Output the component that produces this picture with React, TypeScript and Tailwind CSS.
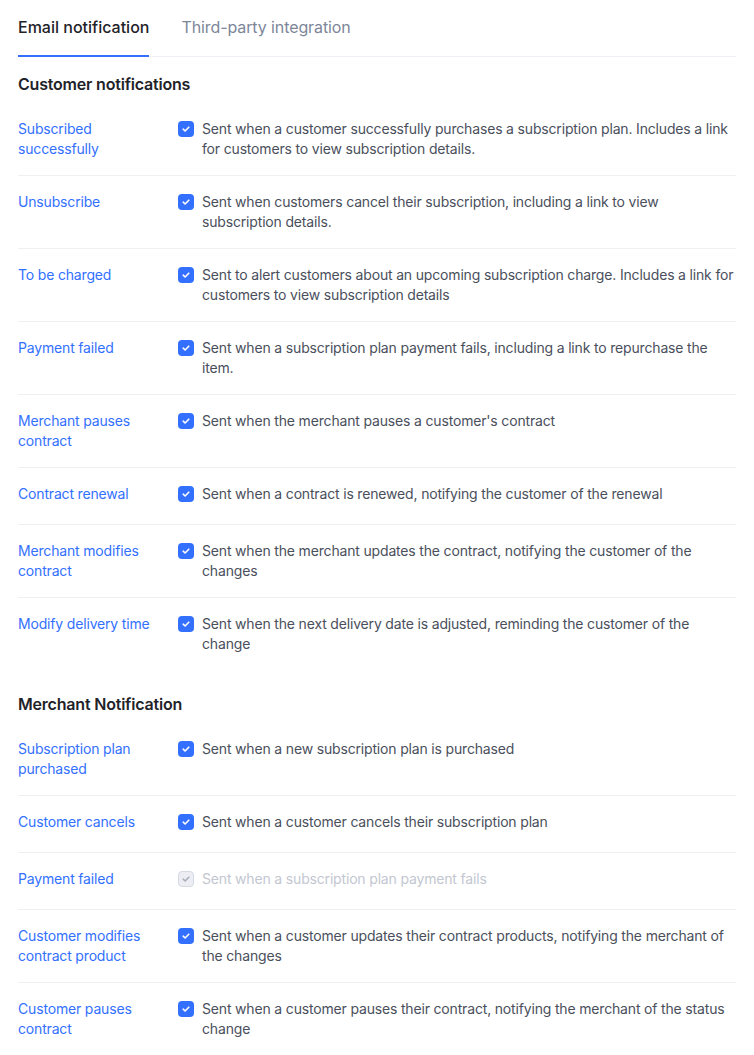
import { FC } from 'react';

type Item = {
  label: string;
  desc: string;
  disabled?: boolean;
};

const customerItems: Item[] = [
  {
    label: 'Subscribed successfully',
    desc: 'Sent when a customer successfully purchases a subscription plan. Includes a link for customers to view subscription details.',
  },
  {
    label: 'Unsubscribe',
    desc: 'Sent when customers cancel their subscription, including a link to view subscription details.',
  },
  {
    label: 'To be charged',
    desc: 'Sent to alert customers about an upcoming subscription charge. Includes a link for customers to view subscription details',
  },
  {
    label: 'Payment failed',
    desc: 'Sent when a subscription plan payment fails, including a link to repurchase the item.',
  },
  { label: 'Merchant pauses contract', desc: "Sent when the merchant pauses a customer's contract" },
  { label: 'Contract renewal', desc: 'Sent when a contract is renewed, notifying the customer of the renewal' },
  {
    label: 'Merchant modifies contract',
    desc: 'Sent when the merchant updates the contract, notifying the customer of the changes',
  },
  {
    label: 'Modify delivery time',
    desc: 'Sent when the next delivery date is adjusted, reminding the customer of the change',
  },
];

const merchantItems: Item[] = [
  { label: 'Subscription plan purchased', desc: 'Sent when a new subscription plan is purchased' },
  { label: 'Customer cancels', desc: 'Sent when a customer cancels their subscription plan' },
  { label: 'Payment failed', desc: 'Sent when a subscription plan payment fails', disabled: true },
  {
    label: 'Customer modifies contract product',
    desc: 'Sent when a customer updates their contract products, notifying the merchant of the changes',
  },
  {
    label: 'Customer pauses contract',
    desc: 'Sent when a customer pauses their contract, notifying the merchant of the status change',
  },
];

const Checkbox: FC<{ disabled?: boolean }> = ({ disabled }) => (
  <span
    className={`mt-[2px] flex h-4 w-4 shrink-0 items-center justify-center rounded-[4px] ${
      disabled ? 'border border-[#d5d9e3] bg-[#eceef4]' : 'bg-[#3370ff]'
    }`}
  >
    <svg width="10" height="10" viewBox="0 0 10 10" fill="none">
      <path
        d="M2.2 5.2 4.1 7 7.8 3.2"
        stroke={disabled ? '#a9aebb' : '#ffffff'}
        strokeWidth="1.6"
        strokeLinecap="round"
        strokeLinejoin="round"
      />
    </svg>
  </span>
);

const Row: FC<{ item: Item; last?: boolean }> = ({ item, last }) => (
  <div className={`flex min-h-[57px] items-start py-4 ${last ? '' : 'border-b border-[#eef0f3]'}`}>
    <div className="w-[160px] shrink-0 pr-4 text-[#3370ff]">{item.label}</div>
    <div className="flex flex-1 items-start gap-2">
      <Checkbox disabled={item.disabled} />
      <p className={item.disabled ? 'text-[#c3c7d1]' : 'text-[#4a4f5c]'}>{item.desc}</p>
    </div>
  </div>
);

const Section: FC<{ title: string; items: Item[] }> = ({ title, items }) => (
  <section>
    <h2 className="mb-[7px] text-base leading-6 font-semibold tracking-[-0.2px] text-[#1f2329]">{title}</h2>
    {items.map((item, i) => (
      <Row key={item.label + i} item={item} last={i === items.length - 1} />
    ))}
  </section>
);

export default function App() {
  return (
    <div
      className="min-h-screen bg-white px-[18px] text-sm leading-5 tracking-[-0.17px]"
      style={{ fontFamily: 'Inter, "Liberation Sans", sans-serif' }}
    >
      {/* Tabs */}
      <nav className="flex gap-8 border-b border-[#eef0f5]">
        <button className="-mb-px border-b-2 border-[#3370ff] pt-[15px] pb-[16px] text-base leading-6 font-medium tracking-normal text-[#1f2329]">
          Email notification
        </button>
        <button className="-mb-px border-b-2 border-transparent pt-[15px] pb-[16px] text-base leading-6 tracking-[-0.1px] text-[#7d8699]">
          Third-party integration
        </button>
      </nav>

      <div className="pt-[15px]">
        <Section title="Customer notifications" items={customerItems} />
        <div className="mt-[22px]">
          <Section title="Merchant Notification" items={merchantItems} />
        </div>
      </div>
    </div>
  );
}
